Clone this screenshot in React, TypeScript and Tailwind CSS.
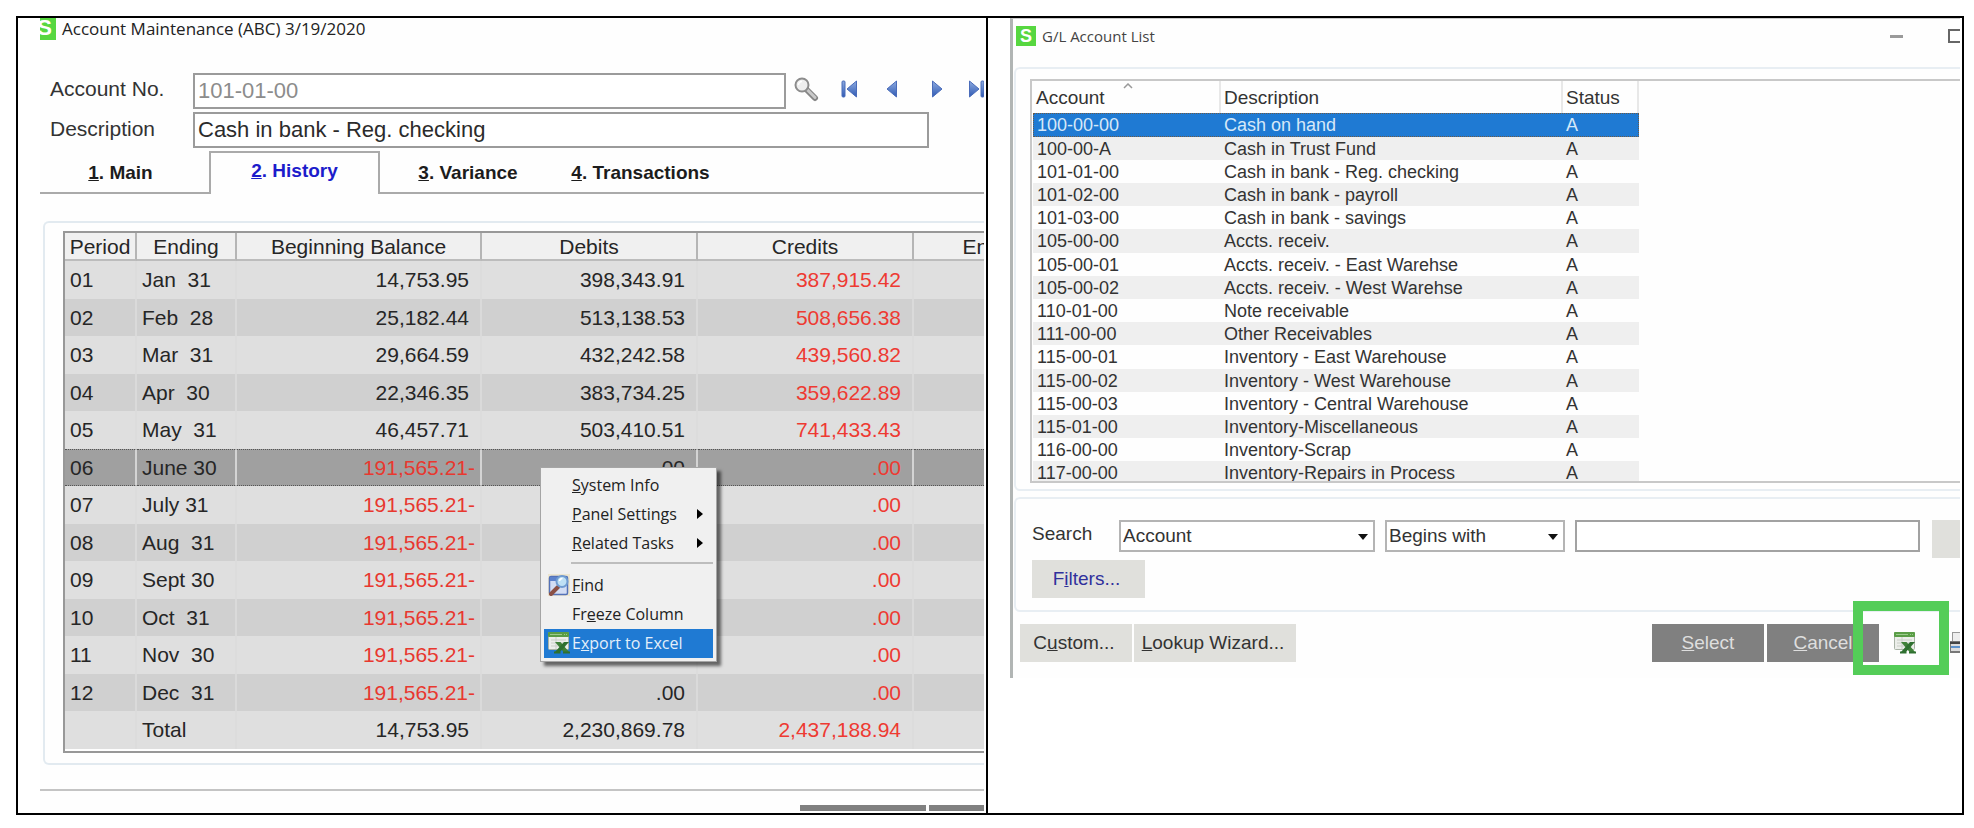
import { useState } from "react";
import type { ReactNode } from "react";
import clsx from "clsx";

// ═══════════════ Types ═══════════════

interface PeriodRow {
  period: string;
  ending: string;
  beginning: string;
  debits: string;
  credits: string;
}

interface Account {
  no: string;
  description: string;
}

// ═══════════════ Data ═══════════════

const OVERDRAWN = "191,565.21-";

const PERIODS: PeriodRow[] = [
  { period: "01", ending: "Jan  31", beginning: "14,753.95", debits: "398,343.91", credits: "387,915.42" },
  { period: "02", ending: "Feb  28", beginning: "25,182.44", debits: "513,138.53", credits: "508,656.38" },
  { period: "03", ending: "Mar  31", beginning: "29,664.59", debits: "432,242.58", credits: "439,560.82" },
  { period: "04", ending: "Apr  30", beginning: "22,346.35", debits: "383,734.25", credits: "359,622.89" },
  { period: "05", ending: "May  31", beginning: "46,457.71", debits: "503,410.51", credits: "741,433.43" },
  { period: "06", ending: "June 30", beginning: OVERDRAWN, debits: ".00", credits: ".00" },
  { period: "07", ending: "July 31", beginning: OVERDRAWN, debits: ".00", credits: ".00" },
  { period: "08", ending: "Aug  31", beginning: OVERDRAWN, debits: ".00", credits: ".00" },
  { period: "09", ending: "Sept 30", beginning: OVERDRAWN, debits: ".00", credits: ".00" },
  { period: "10", ending: "Oct  31", beginning: OVERDRAWN, debits: ".00", credits: ".00" },
  { period: "11", ending: "Nov  30", beginning: OVERDRAWN, debits: ".00", credits: ".00" },
  { period: "12", ending: "Dec  31", beginning: OVERDRAWN, debits: ".00", credits: ".00" },
  { period: "", ending: "Total", beginning: "14,753.95", debits: "2,230,869.78", credits: "2,437,188.94" },
];

const ACCOUNTS: Account[] = [
  { no: "100-00-00", description: "Cash on hand" },
  { no: "100-00-A", description: "Cash in Trust Fund" },
  { no: "101-01-00", description: "Cash in bank - Reg. checking" },
  { no: "101-02-00", description: "Cash in bank - payroll" },
  { no: "101-03-00", description: "Cash in bank - savings" },
  { no: "105-00-00", description: "Accts. receiv." },
  { no: "105-00-01", description: "Accts. receiv. - East Warehse" },
  { no: "105-00-02", description: "Accts. receiv. - West Warehse" },
  { no: "110-01-00", description: "Note receivable" },
  { no: "111-00-00", description: "Other Receivables" },
  { no: "115-00-01", description: "Inventory - East Warehouse" },
  { no: "115-00-02", description: "Inventory - West Warehouse" },
  { no: "115-00-03", description: "Inventory - Central Warehouse" },
  { no: "115-01-00", description: "Inventory-Miscellaneous" },
  { no: "116-00-00", description: "Inventory-Scrap" },
  { no: "117-00-00", description: "Inventory-Repairs in Process" },
];

const TABS = [
  { key: "1", label: "Main", width: "w-[169px] pr-2" },
  { key: "2", label: "History", width: "w-[171px]" },
  { key: "3", label: "Variance", width: "w-[176px]" },
  { key: "4", label: "Transactions", width: "w-[169px]" },
];

// ═══════════════ Icons ═══════════════

function MagnifierIcon() {
  return (
    <svg width="26" height="26" viewBox="0 0 26 26" fill="none">
      <path d="M14 14l8 8" stroke="#858585" strokeWidth="6" strokeLinecap="round" />
      <path d="M14.5 14l7.5 7.5" stroke="#c9c9c9" strokeWidth="3" strokeLinecap="round" />
      <circle cx="9" cy="9" r="6.5" fill="#eee" stroke="#8c8c8c" strokeWidth="2" />
      <path d="M5.5 9a3.5 3.5 0 0 1 3.5-3.5" stroke="#fff" strokeWidth="1.5" />
    </svg>
  );
}

function NavIcon({ back, bar }: { back?: boolean; bar?: boolean }) {
  return (
    <svg
      width="18"
      height="18"
      viewBox="0 0 18 18"
      className={clsx("shrink-0", back && "-scale-x-100")}
    >
      <defs>
        <linearGradient id="nav" x1="0" y1="0" x2="0" y2="1">
          <stop offset="0" stopColor="#8eabdf" />
          <stop offset="1" stopColor="#2f5ab4" />
        </linearGradient>
      </defs>
      <path d="M1.5 1v16l9.5-8z" fill="url(#nav)" stroke="#4a6cba" />
      {bar && <rect x="13" y="1" width="3" height="16" rx="1" fill="url(#nav)" stroke="#4a6cba" />}
    </svg>
  );
}

function ExcelIcon() {
  return (
    <svg width="22" height="22" viewBox="0 0 22 22" fill="none" className="shrink-0">
      <rect x="0.5" y="0.5" width="20" height="17" rx="1" fill="#eceeea" stroke="#a9b3a6" />
      <path d="M3 8h15M3 11h15M3 14h15M8 5v12" stroke="#c9cec6" />
      <rect width="21" height="5" rx="1" fill="#5a9d46" />
      <path d="M2 2.5h12M16 2.5h1M18 2.5h1" stroke="#9ccb8d" />
      <path d="M7 10h5.500l9 10.500h-5.500z" fill="#3f8138" />
      <path d="M16 10h5l-9.500 10.500h-5z" fill="#2f7030" />
      <path d="M6 20.500h6.500M15 20.500h7" stroke="#2f7030" strokeWidth="2" />
    </svg>
  );
}

function FindIcon() {
  return (
    <svg width="22" height="22" viewBox="0 0 22 22" fill="none">
      <rect width="22" height="22" fill="#ece5cf" />
      <rect x="1.5" y="2.5" width="18" height="18" rx="1.5" fill="#d3ddf4" stroke="#5472b8" strokeWidth="1.5" />
      <rect x="2" y="3" width="17" height="4" fill="#5d82cc" />
      <path d="M3 20L10 13" stroke="#8b5046" strokeWidth="4" strokeLinecap="round" />
      <circle cx="14" cy="7.5" r="5.5" fill="#bfe0f5" stroke="#6f9bd1" strokeWidth="2" />
      <path d="M11.5 7a3 3 0 0 1 3-2.5" stroke="#fff" strokeWidth="1.5" />
    </svg>
  );
}

function PrinterIcon() {
  return (
    <svg width="22" height="22" viewBox="0 0 22 22" fill="none">
      <rect x="2.5" y="0.5" width="16" height="10" fill="#eee" stroke="#999" />
      <rect x="0.5" y="9.5" width="21" height="11" fill="#dcdcdc" stroke="#777" />
      <path d="M0 11h22" stroke="#444" strokeWidth="2" />
      <path d="M1 15h20" stroke="#5c92cc" strokeWidth="2" />
      <path d="M1 20h20" stroke="#777" strokeWidth="2" />
    </svg>
  );
}

function SubmenuArrow() {
  return (
    <svg width="6" height="10" viewBox="0 0 6 10">
      <path d="M0 0v10l6-5z" fill="#000" />
    </svg>
  );
}

// ═══════════════ Account Maintenance ═══════════════

function MenuItem({
  icon,
  submenu,
  active,
  children,
}: {
  icon?: ReactNode;
  submenu?: boolean;
  active?: boolean;
  children: ReactNode;
}) {
  return (
    <button
      type="button"
      role="menuitem"
      className={clsx(
        "flex h-[29px] w-full items-center pr-[10px] pb-[2px] pl-1 text-left whitespace-nowrap",
        active ? "bg-[#1f7ad3] text-[#e4effa]" : "text-[#222]",
      )}
    >
      <span className="w-6 shrink-0">{icon}</span>
      <span className="flex-1">{children}</span>
      {submenu && <SubmenuArrow />}
    </button>
  );
}

function ContextMenu() {
  return (
    <div
      role="menu"
      className="absolute top-[449px] left-[500px] w-[177px] border border-[#a5a5a5] bg-[#f0f0f0] p-[3px] font-['Open_Sans',sans-serif] text-base shadow-[4px_4px_3px_rgba(0,0,0,0.55)]"
    >
      <MenuItem><u>S</u>ystem Info</MenuItem>
      <MenuItem submenu><u>P</u>anel Settings</MenuItem>
      <MenuItem submenu><u>R</u>elated Tasks</MenuItem>
      <hr className="mt-[4px] mb-[7px] ml-[27px] border-t-2 border-[#bdbdbd]" />
      <MenuItem icon={<FindIcon />}><u>F</u>ind</MenuItem>
      <MenuItem>Fr<u>e</u>eze Column</MenuItem>
      <MenuItem icon={<ExcelIcon />} active>E<u>x</u>port to Excel</MenuItem>
    </div>
  );
}

function HistoryTable() {
  const head =
    "border-r-2 border-b-2 border-r-[#b5b5b5] border-b-[#bcbcbc] bg-[#f0f0f0] p-0 pt-[2px] text-center font-normal";

  return (
    <table className="w-[1095px] table-fixed border-separate border-spacing-0 text-[21px] leading-6 text-[#262626]">
      <colgroup>
        <col className="w-[72px]" />
        <col className="w-[100px]" />
        <col className="w-[245px]" />
        <col className="w-[216px]" />
        <col className="w-[216px]" />
        <col className="w-[246px]" />
      </colgroup>
      <thead>
        <tr className="h-[28px]">
          <th className={head}>Period</th>
          <th className={head}>Ending</th>
          <th className={head}>Beginning Balance</th>
          <th className={head}>Debits</th>
          <th className={head}>Credits</th>
          <th className={head}>Ending Balance</th>
        </tr>
      </thead>
      <tbody>
        {PERIODS.map((row, i) => {
          const selected = row.period === "06";
          const negative = row.beginning.endsWith("-");
          const cell = clsx(
            "border-r-2 py-0",
            selected
              ? "border-y border-y-[#555] border-r-[#d4d4d4] [border-bottom-style:dotted] [border-top-style:dotted]"
              : i % 2 === 0
                ? "border-r-[#dcdcdc]"
                : "border-r-[#dadada]",
          );
          return (
            <tr
              key={row.period || "total"}
              className={clsx(
                i % 2 === 0 ? "h-[38px]" : "h-[37px]",
                selected ? "bg-[#a0a0a0]" : i % 2 === 0 ? "bg-[#dfdfdf]" : "bg-[#d0d0d0]",
              )}
            >
              <td className={clsx(cell, "pl-[5px]")}>{row.period}</td>
              <td className={clsx(cell, "pl-[5px] whitespace-pre")}>{row.ending}</td>
              <td className={clsx(cell, "text-right", negative ? "pr-[5px] text-[#e8382f]" : "pr-[11px]")}>
                {row.beginning}
              </td>
              <td className={clsx(cell, "pr-[11px] text-right")}>{row.debits}</td>
              <td className={clsx(cell, "pr-[11px] text-right text-[#ee3a32]")}>{row.credits}</td>
              <td className={cell} />
            </tr>
          );
        })}
      </tbody>
    </table>
  );
}

function AccountMaintenance() {
  const [tab, setTab] = useState("2");
  const field = "h-9 border-2 border-[#9b9b9b] bg-white pl-[3px] text-[22px] outline-none";

  return (
    <section className="relative mr-[2px] mb-[2px] ml-[22px] overflow-hidden bg-[#fefefe]">
      <header className="flex h-[22px] items-center">
        <span className="flex h-[22px] w-4 justify-end overflow-hidden bg-[#57d740] pr-1 text-[22px] leading-5 font-bold text-white">
          S
        </span>
        <h1 className="ml-[6px] font-['Open_Sans',sans-serif] text-[17px] whitespace-nowrap text-[#222]">
          Account Maintenance (ABC) 3/19/2020
        </h1>
      </header>

      <div className="mt-[33px] flex flex-col gap-[3px] pl-[10px] text-[21px] text-[#333]">
        <div className="flex h-9 items-start">
          <label htmlFor="account-no" className="w-[143px] shrink-0 leading-8">Account No.</label>
          <input id="account-no" defaultValue="101-01-00" className={clsx(field, "w-[593px] shrink-0 text-[#8c8c8c]")} />
          <div className="flex h-8 shrink-0 items-center">
            <button type="button" aria-label="Look up account" className="ml-[7px]"><MagnifierIcon /></button>
            <button type="button" aria-label="First" className="ml-[21px]"><NavIcon back bar /></button>
            <button type="button" aria-label="Previous" className="ml-[22px]"><NavIcon back /></button>
            <button type="button" aria-label="Next" className="ml-[33px]"><NavIcon /></button>
            <button type="button" aria-label="Last" className="ml-[19px]"><NavIcon bar /></button>
          </div>
        </div>
        <div className="flex h-9 items-start">
          <label htmlFor="account-description" className="w-[143px] shrink-0 leading-[34px]">Description</label>
          <input
            id="account-description"
            defaultValue="Cash in bank - Reg. checking"
            className={clsx(field, "w-[736px] shrink-0 text-[#2b2b2b]")}
          />
        </div>
      </div>

      <div role="tablist" className="mt-[3px] flex h-[43px] text-[19px] font-bold">
        {TABS.map((t) => (
          <button
            key={t.key}
            type="button"
            role="tab"
            aria-selected={tab === t.key}
            onClick={() => setTab(t.key)}
            className={clsx(
              "shrink-0 border-[#aaa]",
              t.width,
              tab === t.key ? "border-x-2 border-t-2 pb-1 text-[#1c1ccb]" : "border-b-2 pt-[3px] text-[#1c1c1c]",
            )}
          >
            <u>{t.key}</u>. {t.label}
          </button>
        ))}
        <div className="flex-1 border-b-2 border-[#aaa]" />
      </div>

      <div className="mt-[27px] ml-[3px] rounded-l-md border-2 border-r-0 border-[#e2eaf0] pt-2 pb-[10px] pl-[18px]">
        <div className="overflow-hidden border-y-2 border-l-2 border-[#989898] pb-[2px]">
          <HistoryTable />
        </div>
      </div>

      <div className="mt-6 h-[2px] bg-[#c4c4c4]" />
      <div className="mt-[14px] flex h-[6px] justify-end gap-[3px]">
        <div className="w-[126px] bg-[#808080]" />
        <div className="w-[55px] bg-[#808080]" />
      </div>

      <ContextMenu />
    </section>
  );
}

// ═══════════════ G/L Account List ═══════════════

function SelectBox({ id, label, options, className }: { id: string; label?: string; options: string[]; className: string }) {
  return (
    <div className={clsx("relative h-8 shrink-0", className)}>
      <select
        id={id}
        aria-label={label}
        className="h-full w-full appearance-none border-2 border-[#b4b4b4] bg-white pl-[2px] text-[19px] text-[#333] outline-none"
      >
        {options.map((o) => (
          <option key={o}>{o}</option>
        ))}
      </select>
      <svg width="10" height="6" viewBox="0 0 10 6" className="pointer-events-none absolute top-[14px] right-[7px]">
        <path d="M0 0h10L5 6z" fill="#111" />
      </svg>
    </div>
  );
}

function AccountTable() {
  const head = "border-r-2 border-[#e8e8e8] p-0 pl-[3px] pt-px text-left text-[19px] font-normal";

  return (
    <table className="w-[606px] table-fixed border-separate border-spacing-0 text-[18px] leading-[22px] text-[#333]">
      <colgroup>
        <col className="w-[188px]" />
        <col className="w-[342px]" />
        <col className="w-[76px]" />
      </colgroup>
      <thead>
        <tr className="h-8">
          <th className={clsx(head, "relative")}>
            Account
            <svg width="10" height="6" viewBox="0 0 10 6" fill="none" className="absolute top-[2px] left-[90px]">
              <path d="M1 5l4-4 4 4" stroke="#999" strokeWidth="1.5" />
            </svg>
          </th>
          <th className={head}>Description</th>
          <th className={head}>Status</th>
        </tr>
      </thead>
      <tbody>
        {ACCOUNTS.map((a, i) => (
          <tr
            key={a.no}
            className={clsx(
              i % 5 === 0 ? "h-6" : "h-[23px]",
              i === 0
                ? "bg-[#1f7ad3] text-[#d6e8f8] outline-1 -outline-offset-1 outline-[#6b5a48] outline-dotted"
                : i % 2 === 1
                  ? "bg-[#efefef]"
                  : "bg-[#fefefe]",
            )}
          >
            <td className="py-0 pl-1">{a.no}</td>
            <td className="py-0 pl-[3px]">{a.description}</td>
            <td className="py-0 pl-[3px]">A</td>
          </tr>
        ))}
      </tbody>
    </table>
  );
}

function AccountList() {
  const panel = "ml-px rounded-l-md border-2 border-r-0 border-[#e8eef3]";
  const lightButton = "shrink-0 h-[38px] bg-[#e0e0dc]";
  const darkButton = "h-[38px] w-[112px] shrink-0 bg-[#808080] text-[#dedede]";

  return (
    <section className="mr-[2px] ml-[22px] self-start overflow-hidden border-t border-l-[3px] border-t-[#ccc] border-l-[#b1b5b4] bg-[#fefefe] pb-4 text-[19px] text-[#333]">
      <header className="flex h-[34px] items-center pl-[3px]">
        <span className="flex size-5 items-center justify-center bg-[#57d740] text-[18px] font-bold text-white">S</span>
        <h2 className="ml-[6px] font-['Open_Sans',sans-serif] text-[15px] text-[#444]">G/L Account List</h2>
        <button type="button" aria-label="Minimize" className="ml-auto h-[3px] w-[13px] bg-[#9a9a9a]" />
        <button type="button" aria-label="Maximize" className="ml-[45px] h-[14px] w-3 border-2 border-r-0 border-[#666]" />
      </header>

      <div className={clsx(panel, "mt-[14px] pt-[10px] pb-[6px] pl-[14px]")}>
        <div className="h-[404px] overflow-hidden border-y-2 border-l-2 border-[#c8c8c8] pl-px">
          <AccountTable />
        </div>
      </div>

      <div className={clsx(panel, "mt-[6px] h-[115px] pt-[21px] pl-4")}>
        <div className="flex items-start">
          <label htmlFor="search-field" className="w-[87px] shrink-0 leading-7">Search</label>
          <SelectBox id="search-field" options={["Account", "Description", "Status"]} className="w-[256px]" />
          <SelectBox
            id="search-operator"
            label="Search operator"
            options={["Begins with", "Contains", "Ends with"]}
            className="ml-[10px] w-[180px]"
          />
          <input aria-label="Search text" className="ml-[10px] h-8 min-w-0 flex-1 border-2 border-[#a2a2a2] bg-white px-1 outline-none" />
          <button type="button" aria-label="Find accounts" className={clsx(lightButton, "ml-3 w-7")} />
        </div>
        <button type="button" className={clsx(lightButton, "mt-[2px] w-[113px] pr-1 text-[#30309c]")}>
          F<u>i</u>lters...
        </button>
      </div>

      <div className="mt-3 flex pl-[7px]">
        <button type="button" className={clsx(lightButton, "w-[112px] pr-1")}>C<u>u</u>stom...</button>
        <button type="button" className={clsx(lightButton, "ml-[2px] w-[162px] pr-1")}><u>L</u>ookup Wizard...</button>
        <button type="button" className={clsx(darkButton, "ml-auto")}><u>S</u>elect</button>
        <button type="button" className={clsx(darkButton, "ml-[3px]")}><u>C</u>ancel</button>
        <div className="relative ml-[15px] flex w-[56px] shrink-0 items-center">
          <button type="button" aria-label="Export to Excel"><ExcelIcon /></button>
          <div className="pointer-events-none absolute -top-[23px] -left-[41px] h-[74px] w-24 border-10 border-[#54cd58]" />
        </div>
        <button type="button" aria-label="Print" className="w-[10px] shrink-0 overflow-hidden">
          <PrinterIcon />
        </button>
      </div>
    </section>
  );
}

// ═══════════════ Page ═══════════════

export default function App() {
  return (
    <main className="min-h-screen bg-white pt-4 pr-[10px] pl-4 font-['Liberation_Sans',Arial,sans-serif]">
      <div className="grid grid-cols-[minmax(0,970fr)_minmax(0,976fr)] border-y-2 border-l-2 border-black">
        <div className="grid grid-cols-[minmax(0,1fr)] border-r-2 border-black">
          <AccountMaintenance />
        </div>
        <div className="grid grid-cols-[minmax(0,1fr)] border-r-2 border-black">
          <AccountList />
        </div>
      </div>
    </main>
  );
}
